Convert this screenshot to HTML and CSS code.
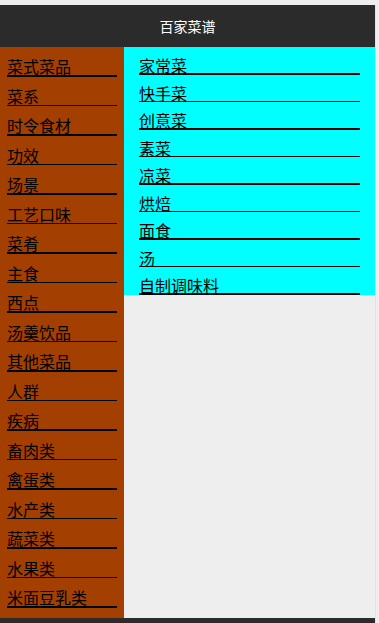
FILE: index.html
```html
<!DOCTYPE html>
<html lang="zh">
<head>
<meta charset="utf-8">
<title>百家菜谱</title>
<link rel="stylesheet" href="styles.css">
</head>
<body>
<div class="app">
  <header class="topbar">百家菜谱</header>
  <main class="main">
    <ul class="cats">
      <li>菜式菜品</li>
      <li>菜系</li>
      <li>时令食材</li>
      <li>功效</li>
      <li>场景</li>
      <li>工艺口味</li>
      <li>菜肴</li>
      <li>主食</li>
      <li>西点</li>
      <li>汤羹饮品</li>
      <li>其他菜品</li>
      <li>人群</li>
      <li>疾病</li>
      <li>畜肉类</li>
      <li>禽蛋类</li>
      <li>水产类</li>
      <li>蔬菜类</li>
      <li>水果类</li>
      <li>米面豆乳类</li>
    </ul>
    <ul class="subs">
      <li>家常菜</li>
      <li>快手菜</li>
      <li>创意菜</li>
      <li>素菜</li>
      <li>凉菜</li>
      <li>烘焙</li>
      <li>面食</li>
      <li>汤</li>
      <li>自制调味料</li>
    </ul>
  </main>
  <footer class="bottombar"></footer>
</div>
</body>
</html>
```

FILE: styles.css
```css
html, body {
  margin: 0;
  padding: 0;
  background: #eeeeee;
}
body {
  font-family: "Noto Sans CJK SC", "Noto Sans", sans-serif;
  color: #000;
}
.app {
  width: 375px;
  height: 618px;
  margin-top: 5px;
  display: flex;
  flex-direction: column;
  border-right: 1px solid #e2e2e2;
}
.topbar {
  height: 42px;
  flex: 0 0 42px;
  background: #2b2b2b;
  color: #fff;
  font-size: 14px;
  display: flex;
  align-items: center;
  justify-content: center;
}
.main {
  flex: 1;
  display: flex;
  align-items: flex-start;
}
.cats, .subs {
  list-style: none;
  margin: 0;
}
.cats {
  width: 124px;
  box-sizing: border-box;
  align-self: stretch;
  background: #a33f00;
  padding: 0 7px 10px 7px;
}
.cats li {
  margin-top: 10px;
  height: 18px;
  line-height: 18px;
  font-size: 16px;
  border-bottom: 1px solid #000;
  white-space: nowrap;
}
.cats li:nth-child(odd) {
  border-bottom-width: 2px;
}
.subs {
  flex: 1;
  background: #00ffff;
  padding: 0 15px;
}
.subs li {
  margin-top: 10px;
  height: 16px;
  line-height: 16px;
  font-size: 16px;
  border-bottom: 1px solid #000;
  white-space: nowrap;
}
.subs li:nth-child(odd) {
  border-bottom-width: 2px;
}
.bottombar {
  height: 5px;
  flex: 0 0 5px;
  background: #2b2b2b;
}
```
